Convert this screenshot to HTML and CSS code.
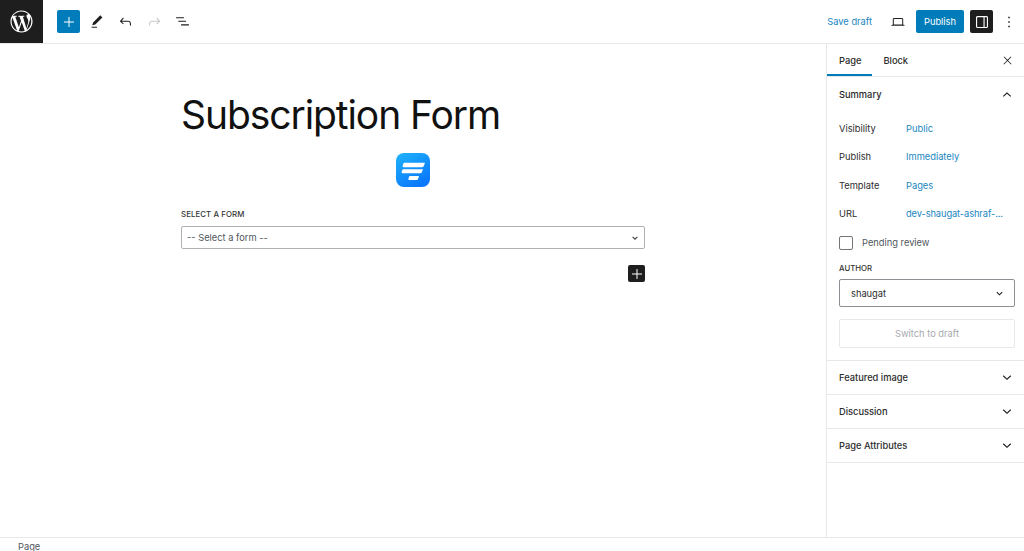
FILE: index.html
```html
<!DOCTYPE html>
<html lang="en">

<head>
    <meta charset="UTF-8" />
    <title>Edit Page - Subscription Form</title>
    <link rel="stylesheet" href="styles.css">
</head>

<body>
    <div class="editor">

        <!-- Top toolbar -->
        <header class="topbar">
            <a class="wp-logo" href="#">
                <svg width="23" height="23" viewBox="0 0 20 20">
                    <path fill="#fff" d="M10 .4C4.7.4.4 4.7.4 10s4.3 9.6 9.6 9.6 9.6-4.3 9.6-9.6S15.3.4 10 .4zM1.4 10c0-1.2.3-2.4.7-3.5l4.1 11.3C3.4 16.4 1.4 13.4 1.4 10zM10 18.6c-.8 0-1.6-.1-2.4-.4l2.6-7.5 2.6 7.3c0 0 0 .1.1.1-.9.3-1.900.5-2.900.5zm1.200-12.700c.5 0 1-.1 1-.1.5-.1.4-.7-.1-.7 0 0-1.400.1-2.300.1-.9 0-2.300-.1-2.300-.1-.5 0-.5.7-.1.7 0 0 .4.1.9.1l1.300 3.600-1.900 5.600L4.600 5.900c.5 0 1-.1 1-.1.5-.1.4-.7-.1-.7 0 0-1.400.1-2.300.1h-.6C4.200 2.800 6.900 1.400 10 1.400c2.300 0 4.300.9 5.900 2.300h-.1c-.9 0-1.500.8-1.500 1.600 0 .7.4 1.400.9 2.100.3.600.7 1.400.7 2.500 0 .8-.3 1.700-.7 3l-.9 3.100-3.100-10.100zm3.200 11.500l2.600-7.600c.5-1.200.6-2.200.6-3 0-.3 0-.6-.1-.9.7 1.200 1 2.600 1 4.100 0 3.200-1.700 5.900-4.100 7.400z" />
                </svg>
            </a>
            <div class="tools">
                <button class="add-btn">
                    <svg width="12" height="12" viewBox="0 0 24 24"><path fill="#fff" d="M11 2h2v9h9v2h-9v9h-2v-9H2v-2h9z" /></svg>
                </button>
                <button class="icon-btn">
                    <svg width="16" height="16" viewBox="0 0 24 24"><path fill="#1e1e1e" d="M20.100 5.100 16.900 2 6.200 12.600l-1.300 4.400 4.500-1.300L20.100 5.100zM4 20.800h8v-1.500H4v1.500z" /></svg>
                </button>
                <button class="icon-btn">
                    <svg width="17" height="17" viewBox="0 0 24 24"><path fill="#1e1e1e" d="M18.300 11.700c-.6-.6-1.400-.9-2.300-.9H6.700l2.900-3.300-1.100-1-4.500 5L8.500 16l1-1-2.700-2.700H16c.5 0 .9.2 1.300.5 1 1 1 3.400 1 4.500v.3h1.500v-.2c0-1.500 0-4.300-1.500-5.700z" /></svg>
                </button>
                <button class="icon-btn">
                    <svg width="17" height="17" viewBox="0 0 24 24"><path fill="#c9c9c9" d="M15.600 6.500l-1.100 1 2.900 3.300H8c-.9 0-1.700.3-2.300.9-1.400 1.500-1.400 4.200-1.400 5.600v.2h1.500v-.3c0-1.100 0-3.500 1-4.500.3-.3.7-.5 1.300-.5h9.200L14.500 15l1.100 1.100 4.600-4.600-4.600-5z" /></svg>
                </button>
                <button class="icon-btn">
                    <svg width="17" height="17" viewBox="0 0 24 24"><path fill="#1e1e1e" d="M3 6h11v1.500H3V6zm3 5h11v1.500H6V11zm4 5h11v1.500H10V16z" /></svg>
                </button>
            </div>
            <div class="actions">
                <a class="save-draft" href="#">Save draft</a>
                <button class="icon-btn preview">
                    <svg width="16" height="16" viewBox="0 0 24 24"><path fill="#1e1e1e" d="M20.500 16h-.7V8c0-1.100-.9-2-2-2H6.200c-1.100 0-2 .9-2 2v8h-.7c-.8 0-1.500.7-1.500 1.500h20c0-.8-.7-1.500-1.500-1.500zM5.700 8c0-.3.2-.5.5-.5h11.600c.3 0 .5.2.5.5v7.600H5.700V8z" /></svg>
                </button>
                <button class="publish-btn">Publish</button>
                <button class="settings-btn">
                    <svg width="18" height="18" viewBox="0 0 24 24"><path fill="#fff" d="M18 4H6c-1.100 0-2 .9-2 2v12c0 1.100.9 2 2 2h12c1.100 0 2-.9 2-2V6c0-1.100-.9-2-2-2zM5.500 18V6c0-.3.2-.5.5-.5h8v13H6c-.3 0-.5-.2-.5-.5zm13 0c0 .3-.2.5-.5.5h-2.500v-13H18c.3 0 .5.2.5.5v12z" /></svg>
                </button>
                <button class="icon-btn more">
                    <svg width="18" height="18" viewBox="0 0 24 24"><path fill="#1e1e1e" d="M13 19h-2v-2h2v2zm0-6h-2v-2h2v2zm0-6h-2V5h2v2z" /></svg>
                </button>
            </div>
        </header>

        <div class="workspace">

            <!-- Page content -->
            <main class="canvas">
                <div class="page-column">
                    <h1 class="page-title">Subscription Form</h1>
                    <div class="form-logo">
                        <svg width="34" height="34" viewBox="0 0 34 34">
                            <defs>
                                <linearGradient id="logo-fill" x1="0" y1="0" x2="0.6" y2="1">
                                    <stop offset="0" stop-color="#1fb4fb" />
                                    <stop offset="1" stop-color="#0a78fb" />
                                </linearGradient>
                            </defs>
                            <rect width="34" height="34" rx="8" fill="url(#logo-fill)" />
                            <path fill="#fff" d="M8.500 9.700H29l-1.200 3.400q-.4 1.100-1.500 1.100H7.500q-1.200 0-.9-1.100l.6-2.100q.3-1.300 1.300-1.300z" />
                            <path fill="#fff" d="M7.500 16.300H27l-1.200 3q-.4 1-1.500 1H6.500q-1.200 0-.9-1.100l.5-1.700q.3-1.200 1.400-1.200z" />
                            <path fill="#fff" d="M13.800 23H23l-.9 2.900q-.3 1.100-1.400 1.100h-7.500q-1.100 0-.8-1.100l.6-1.800q.3-1.100.8-1.100z" />
                        </svg>
                    </div>
                    <label class="form-label">SELECT A FORM</label>
                    <div class="form-select">
                        <span>-- Select a form --</span>
                        <svg width="8" height="8" viewBox="0 0 10 10"><path fill="none" stroke="#444" stroke-width="1.500" d="M2 3.500 5 6.500 8 3.500" /></svg>
                    </div>
                    <div class="inserter-row">
                        <button class="block-add">
                            <svg width="12" height="12" viewBox="0 0 24 24"><path fill="#fff" d="M11 2h2v9h9v2h-9v9h-2v-9H2v-2h9z" /></svg>
                        </button>
                    </div>
                </div>
            </main>

            <!-- Settings sidebar -->
            <aside class="sidebar">
                <div class="tabs">
                    <div class="tab active">Page</div>
                    <div class="tab">Block</div>
                    <button class="close-btn">
                        <svg width="13" height="13" viewBox="0 0 24 24"><path fill="#1e1e1e" d="M13 11.800l6.100-6.300-1-1-6.100 6.200-6.100-6.200-1 1 6.100 6.300-6.500 6.700 1 1 6.500-6.600 6.500 6.600 1-1z" /></svg>
                    </button>
                </div>

                <section class="panel summary">
                    <div class="panel-title">
                        <span>Summary</span>
                        <svg class="chevron" width="18" height="18" viewBox="0 0 24 24"><path fill="#1e1e1e" d="M6.500 14.500 12 9.500l5.500 5-1 1.100-4.500-4.100-4.500 4.100z" /></svg>
                    </div>
                    <div class="row"><span class="row-label">Visibility</span><a href="#">Public</a></div>
                    <div class="row"><span class="row-label">Publish</span><a href="#">Immediately</a></div>
                    <div class="row"><span class="row-label">Template</span><a href="#">Pages</a></div>
                    <div class="row"><span class="row-label">URL</span><a class="url-link" href="#">dev-shaugat-ashraf-...</a></div>
                    <div class="check-row">
                        <span class="checkbox"></span>
                        <span>Pending review</span>
                    </div>
                    <div class="author-label">AUTHOR</div>
                    <div class="author-select">
                        <span>shaugat</span>
                        <svg width="9" height="9" viewBox="0 0 10 10"><path fill="none" stroke="#1e1e1e" stroke-width="1.200" d="M2 3.500 5 6.500 8 3.500" /></svg>
                    </div>
                    <button class="draft-btn">Switch to draft</button>
                </section>

                <section class="panel closed">
                    <span>Featured image</span>
                    <svg class="chevron" width="18" height="18" viewBox="0 0 24 24"><path fill="#1e1e1e" d="M17.500 9.500 12 14.500l-5.500-5 1-1.100 4.500 4.100 4.500-4.100z" /></svg>
                </section>
                <section class="panel closed">
                    <span>Discussion</span>
                    <svg class="chevron" width="18" height="18" viewBox="0 0 24 24"><path fill="#1e1e1e" d="M17.500 9.500 12 14.500l-5.500-5 1-1.100 4.500 4.100 4.500-4.100z" /></svg>
                </section>
                <section class="panel closed">
                    <span>Page Attributes</span>
                    <svg class="chevron" width="18" height="18" viewBox="0 0 24 24"><path fill="#1e1e1e" d="M17.500 9.500 12 14.500l-5.500-5 1-1.100 4.500 4.100 4.500-4.100z" /></svg>
                </section>
            </aside>
        </div>

        <!-- Breadcrumb -->
        <footer class="statusbar">Page</footer>
    </div>
</body>

</html>
```

FILE: styles.css
```css
body {
    font-family: Inter, 'Liberation Sans', sans-serif;
    background-color: #fff;
    color: #2c2c2c;
    margin: 0;
    overflow: hidden;
}

button {
    border: none;
    background: none;
    padding: 0;
    font-family: inherit;
    display: flex;
    align-items: center;
    justify-content: center;
}

a {
    color: #1a86bf;
    text-decoration: none;
}

.editor {
    display: flex;
    flex-direction: column;
    height: 551px;
    overflow: hidden;
}

/* top toolbar */
.topbar {
    height: 43px;
    flex: none;
    display: flex;
    align-items: center;
    border-bottom: 1px solid #e8e8e8;
}

.wp-logo {
    width: 43px;
    height: 43px;
    background-color: #1e1e1e;
    display: flex;
    align-items: center;
    justify-content: center;
}

.tools {
    display: flex;
    align-items: center;
    margin-left: 14px;
    gap: 8.500px;
}

.add-btn {
    width: 23px;
    height: 23px;
    background-color: #007cba;
    border-radius: 2px;
    margin-right: -1.500px;
}

.icon-btn {
    width: 20px;
    height: 24px;
}

.actions {
    display: flex;
    align-items: center;
    margin-left: auto;
}

.save-draft {
    font-size: 9.300px;
    margin-right: 16px;
}

.preview {
    margin-right: 8px;
}

.publish-btn {
    width: 48px;
    height: 23px;
    background-color: #007cba;
    color: #fff;
    font-size: 9.300px;
    border-radius: 2px;
    margin-right: 6px;
}

.settings-btn {
    width: 23px;
    height: 23px;
    background-color: #1e1e1e;
    border-radius: 2px;
    margin-right: 6px;
}

.more {
    margin-right: 5px;
}

/* main area */
.workspace {
    flex: 1;
    display: flex;
    min-height: 0;
}

.canvas {
    flex: 1;
    padding-left: 181px;
}

.page-column {
    width: 464px;
}

.page-title {
    font-size: 39px;
    font-weight: 400;
    letter-spacing: -1.080px;
    line-height: 48px;
    color: #111;
    margin: 47px 0 0;
}

.form-logo {
    display: flex;
    justify-content: center;
    margin-top: 14px;
}

.form-logo svg {
    display: block;
}

.form-label {
    display: block;
    font-size: 7.800px;
    font-weight: 500;
    letter-spacing: 0.1px;
    color: #333;
    margin-top: 22px;
}

.form-select {
    height: 21px;
    margin-top: 7px;
    border: 1px solid #b0b0b0;
    border-radius: 2px;
    display: flex;
    align-items: center;
    justify-content: space-between;
    padding: 0 5px;
    font-size: 9.300px;
    color: #50575e;
}

.inserter-row {
    display: flex;
    justify-content: flex-end;
    margin-top: 16px;
}

.block-add {
    width: 17px;
    height: 17px;
    background-color: #1e1e1e;
    border-radius: 2px;
}

/* sidebar */
.sidebar {
    width: 197px;
    flex: none;
    border-left: 1px solid #e8e8e8;
    font-size: 9.300px;
}

.tabs {
    height: 32px;
    display: flex;
    align-items: center;
    border-bottom: 1px solid #e8e8e8;
    font-weight: 500;
}

.tab {
    height: 32px;
    line-height: 33px;
    padding: 0 11px;
    box-sizing: border-box;
}

.tab.active {
    padding-left: 12px;
    box-shadow: inset 0 -2px 0 #007cba;
}

.close-btn {
    margin-left: auto;
    margin-right: 10px;
}

.panel {
    border-bottom: 1px solid #e8e8e8;
    padding: 0 9px 0 12px;
}

.panel-title,
.closed {
    display: flex;
    align-items: center;
    justify-content: space-between;
    font-weight: 500;
}

.panel-title {
    height: 34px;
    margin-bottom: 3px;
}

.closed {
    height: 33px;
}

.chevron {
    margin-right: -1px;
}

.row {
    display: flex;
    align-items: center;
    height: 28.500px;
}

.row-label {
    width: 67px;
}

.url-link {
    letter-spacing: -0.1px;
}

.check-row {
    display: flex;
    align-items: center;
    gap: 9px;
    height: 29px;
    color: #50575e;
}

.checkbox {
    width: 12px;
    height: 12px;
    border: 1px solid #757575;
    border-radius: 2px;
}

.author-label {
    font-size: 7.800px;
    font-weight: 500;
    color: #333;
    margin-top: 6px;
}

.author-select {
    height: 26px;
    margin-top: 6px;
    border: 1px solid #8c8f94;
    border-radius: 2px;
    display: flex;
    align-items: center;
    justify-content: space-between;
    padding: 0 10px 0 11px;
}

.draft-btn {
    width: 100%;
    height: 29px;
    margin: 12px 0 12px;
    border: 1px solid #e8e8e8;
    border-radius: 2px;
    color: #a7aaad;
    font-size: 9.300px;
}

/* bottom bar */
.statusbar {
    height: 13px;
    flex: none;
    border-top: 1px solid #e8e8e8;
    padding-left: 18px;
    font-size: 9.300px;
    line-height: 17px;
    color: #50575e;
}
```
